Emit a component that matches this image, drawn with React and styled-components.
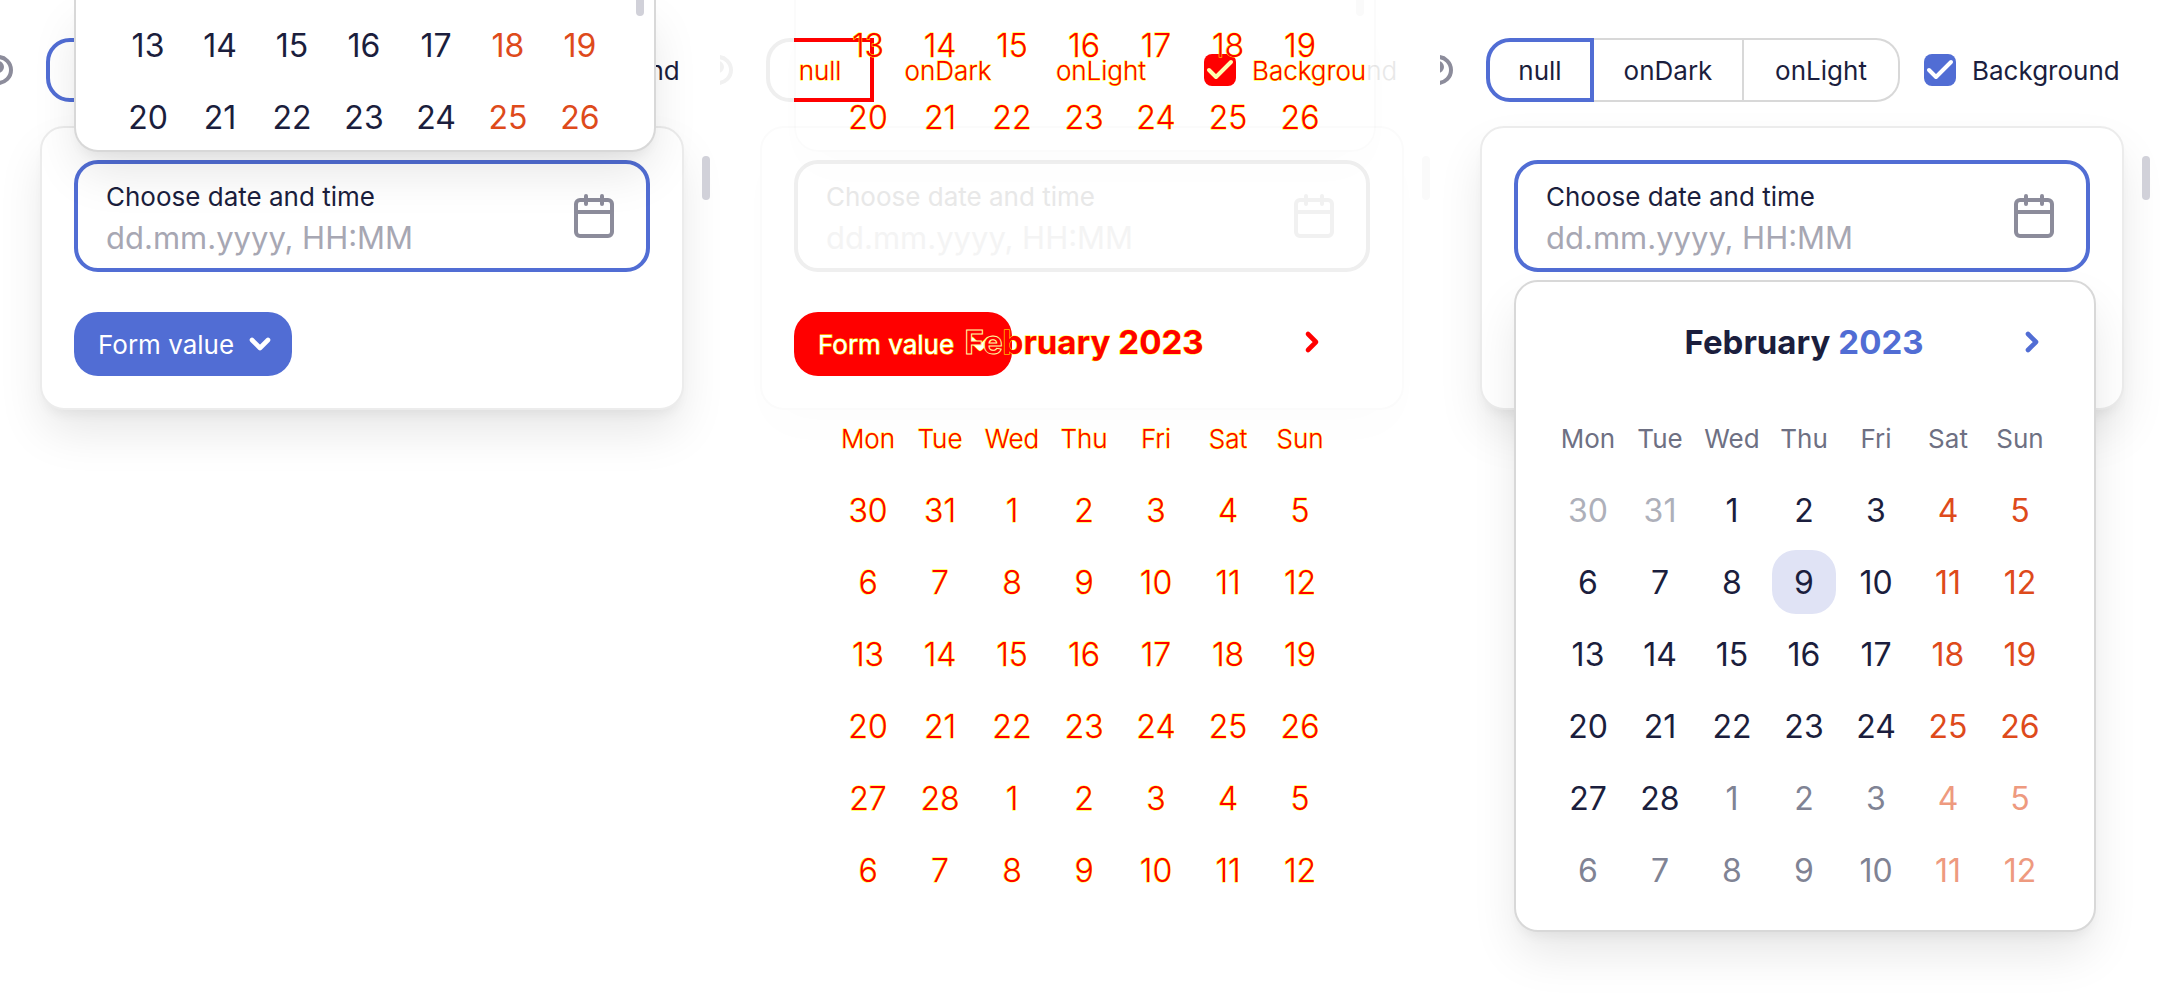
import React, { useId } from "react";
import styled, { createGlobalStyle, css, ThemeProvider } from "styled-components";

const plain = {
  diff: false,
  text: "#1b1e3d",
  muted: "#6e7083",
  past: "#aeb0ba",
  next: "#808394",
  weekend: "#de4a1b",
  weekendNext: "#ee9a7f",
  accent: "#516dd4",
  onAccent: "#ffffff",
  line: "#d8d8d8",
  cardLine: "#ececec",
  surface: "#ffffff",
  selected: "#e0e3f5",
  icon: "#8c8c9b",
  fieldLine: "#516dd4",
  fieldText: "#1b1e3d",
  placeholder: "#a7a7b3",
  thumb: "#d1d1d9",
  shadow: "0 24px 48px -4px rgba(0,0,0,0.1), 0 8px 12px -4px rgba(0,0,0,0.05)",
};

const red = "#ff0000";

const diff = {
  diff: true,
  text: red,
  muted: red,
  past: red,
  next: red,
  weekend: red,
  weekendNext: red,
  accent: red,
  onAccent: "#ffffff",
  line: "transparent",
  cardLine: "#fbfbfb",
  surface: "transparent",
  selected: "transparent",
  icon: "#f1f1f1",
  fieldLine: "#efefef",
  fieldText: "#e8e8e8",
  placeholder: "#f4f4f4",
  thumb: "#fafafa",
  shadow: "0 24px 48px -4px rgba(0,0,0,0.012)",
};

const outline = css`
  ${(p) =>
    p.theme.diff &&
    css`
      -webkit-text-stroke: 1px #ffff00;
      paint-order: stroke fill;
    `}
`;

const GlobalStyle = createGlobalStyle`
  *, *::before, *::after { box-sizing: border-box; }
  body {
    margin: 0;
    background: #ffffff;
    font-family: Inter, "Liberation Sans", sans-serif;
    font-size: 26px;
  }
  button, input { font: inherit; margin: 0; }
  button { padding: 0; border: 0; background: none; cursor: pointer; }
`;

const Page = styled.main`
  display: grid;
  grid-template-columns: repeat(3, minmax(0, 1fr));
  min-height: 100vh;
`;

const Panel = styled.section`
  display: flex;
  gap: 18px;
  padding-right: 10px;
  overflow: hidden;
  color: ${(p) => p.theme.text};
`;

const Content = styled.div`
  flex: 1;
  min-width: 0;
  padding-top: 38px;
`;

const Gutter = styled.div`
  width: 8px;
  padding-top: 156px;
`;

const Thumb = styled.div`
  height: 44px;
  border-radius: 4px;
  background: ${(p) => p.theme.thumb};
`;

const Toolbar = styled.div`
  display: flex;
  align-items: center;
  height: 64px;
`;

const EyeIcon = styled.svg`
  width: 14px;
  height: 32px;
  margin-right: 32px;
  color: ${(p) => p.theme.icon};
`;

const Segments = styled.div`
  display: grid;
  grid-template-columns: 108px 150px 156px;
  height: 64px;
  margin-right: 24px;
`;

const Segment = styled.button`
  position: relative;
  padding-top: 2px;
  border: solid ${(p) => p.theme.line};
  border-width: 2px 2px 2px 0;
  color: ${(p) => p.theme.text};
  line-height: 36px;
  font-weight: ${(p) => (p.theme.diff ? 300 : 400)};
  ${outline}

  &:last-child {
    border-radius: 0 24px 24px 0;
  }

  ${(p) =>
    p.$active &&
    css`
      border: 4px solid ${p.theme.fieldLine};
      border-radius: 24px 0 0 24px;
    `}

  ${(p) =>
    p.$active &&
    p.theme.diff &&
    css`
      &::after {
        content: "";
        position: absolute;
        inset: -4px -4px -4px 24px;
        border: 4px solid ${red};
        border-left: 0;
      }
    `}
`;

const CheckLabel = styled.label`
  display: flex;
  align-items: center;
  gap: 16px;
  line-height: 36px;
  white-space: nowrap;
  font-weight: ${(p) => (p.theme.diff ? 300 : 400)};
`;

const CheckText = styled.span`
  padding-top: 2px;
`;

const CheckBox = styled.span`
  display: grid;
  width: 32px;
  height: 32px;

  > * {
    grid-area: 1 / 1;
    width: 32px;
    height: 32px;
  }

  svg {
    pointer-events: none;
  }
`;

const CheckInput = styled.input`
  appearance: none;
  border-radius: 8px;
  background: ${(p) => p.theme.accent};
`;

const Outlined = styled.span`
  ${outline}
`;

const Ghost = styled.span`
  color: ${(p) => p.theme.fieldText};
`;

const Card = styled.div`
  display: flex;
  flex-direction: column;
  align-items: flex-start;
  gap: 40px;
  margin: 24px 0 0 40px;
  padding: 32px;
  border: 2px solid ${(p) => p.theme.cardLine};
  border-radius: 24px;
  background: #ffffff;
  box-shadow: ${(p) => p.theme.shadow};
`;

const FieldAnchor = styled.div`
  position: relative;
  z-index: 1;
  width: 100%;
`;

const Field = styled.div`
  display: flex;
  align-items: center;
  justify-content: space-between;
  height: 112px;
  padding: 0 28px;
  border: 4px solid ${(p) => p.theme.fieldLine};
  border-radius: 24px;
`;

const FieldText = styled.div`
  flex: 1;
  min-width: 0;
  color: ${(p) => p.theme.fieldText};

  label {
    display: block;
    line-height: 42px;
  }
`;

const DateInput = styled.input`
  display: block;
  width: 100%;
  height: 38px;
  padding: 0;
  border: 0;
  outline: 0;
  background: transparent;
  color: inherit;
  font-size: 31px;

  &::placeholder {
    color: ${(p) => p.theme.placeholder};
    opacity: 1;
  }
`;

const IconButton = styled.button`
  display: grid;
  place-items: center;
  width: 48px;
  height: 48px;
  color: ${(p) => p.color};
`;

const FormButton = styled.button`
  display: flex;
  align-items: center;
  justify-content: space-between;
  width: 218px;
  height: 64px;
  padding: 0 22px 0 24px;
  border-radius: 24px;
  background: ${(p) => p.theme.accent};
  color: ${(p) => p.theme.onAccent};
  white-space: nowrap;
  ${outline}
`;

const Popup = styled.div`
  position: absolute;
  left: 0;
  width: 582px;
  border: 2px solid ${(p) => p.theme.line};
  background: ${(p) => p.theme.surface};
  box-shadow: ${(p) => p.theme.shadow};
`;

const DropDown = styled(Popup)`
  top: calc(100% + 8px);
  padding: 0 36px 24px;
  border-radius: 24px;
  ${(p) => p.theme.diff && "box-shadow: none;"}
`;

const DropUp = styled(Popup)`
  bottom: calc(100% + 8px);
  height: 152px;
  padding: 9px 36px 0;
  border-top: 0;
  border-radius: 0 0 24px 24px;
  border-color: ${(p) => (p.theme.diff ? "rgba(0, 0, 0, 0.016)" : p.theme.line)};
  overflow: hidden;
`;

const PopupThumb = styled.div`
  position: absolute;
  top: 0;
  right: 10px;
  width: 8px;
  height: 16px;
  border-radius: 0 0 4px 4px;
  background: ${(p) => p.theme.thumb};
`;

const MonthBar = styled.div`
  display: grid;
  grid-template-columns: 48px 1fr 48px;
  align-items: center;
  width: 504px;
  height: 120px;
`;

const MonthTitle = styled.div`
  display: flex;
  justify-content: center;
  grid-column: 2;
  gap: 8px;
  font-size: 33px;
  font-weight: 700;
  line-height: 48px;

  button {
    color: ${(p) => p.theme.text};
    ${outline}
  }

  button + button {
    color: ${(p) => p.theme.accent};
  }
`;

const Traced = styled.span`
  -webkit-text-stroke: 1px #ffffa0;
  paint-order: fill stroke;
`;

const Calendar = styled.table`
  width: 504px;
  border-collapse: collapse;
  table-layout: fixed;

  th,
  td {
    width: 72px;
    height: 72px;
    padding: 0;
    text-align: center;
    vertical-align: middle;
  }

  th {
    color: ${(p) => p.theme.muted};
    font-weight: ${(p) => (p.theme.diff ? 300 : 400)};
    ${outline}
  }
`;

const Day = styled.button`
  display: block;
  width: 64px;
  height: 64px;
  margin: 0 auto;
  border-radius: 24px;
  font-size: 32px;
  font-weight: ${(p) => (p.theme.diff ? 300 : 400)};
  color: ${(p) => p.theme[p.$tone]};
  background: ${(p) => (p.$selected ? p.theme.selected : "transparent")};
  ${outline}
`;

const weekDays = ["Mon", "Tue", "Wed", "Thu", "Fri", "Sat", "Sun"];

// Negative days belong to January, days above 100 to March.
const february = [
  [-30, -31, 1, 2, 3, 4, 5],
  [6, 7, 8, 9, 10, 11, 12],
  [13, 14, 15, 16, 17, 18, 19],
  [20, 21, 22, 23, 24, 25, 26],
  [27, 28, 101, 102, 103, 104, 105],
  [106, 107, 108, 109, 110, 111, 112],
];

function toneOf(day, column) {
  if (day < 0) return "past";
  if (day > 100) return column > 4 ? "weekendNext" : "next";
  return column > 4 ? "weekend" : "text";
}

function Weeks({ weeks, selected }) {
  return (
    <tbody>
      {weeks.map((week) => (
        <tr key={week[0]}>
          {week.map((day, column) => (
            <td key={day}>
              <Day type="button" $tone={toneOf(day, column)} $selected={day === selected}>
                {Math.abs(day) % 100}
              </Day>
            </td>
          ))}
        </tr>
      ))}
    </tbody>
  );
}

function Chevron({ down, outlined }) {
  const d = down ? "M2 2l8 8 8-8" : "M2 2l8 8-8 8";
  return (
    <svg
      width={down ? 20 : 12}
      height={down ? 12 : 20}
      viewBox={down ? "0 0 20 12" : "0 0 12 20"}
      fill="none"
      strokeLinecap="round"
      strokeLinejoin="round"
      overflow="visible"
      aria-hidden="true"
    >
      {outlined && <path d={d} stroke="#ffff00" strokeWidth="6" />}
      <path d={d} stroke="currentColor" strokeWidth="4.6" />
    </svg>
  );
}

function CalendarGlyph() {
  return (
    <svg width="40" height="44" viewBox="0 0 40 44" fill="none" stroke="currentColor" strokeWidth="4" aria-hidden="true">
      <rect x="2" y="6" width="36" height="36" rx="4" />
      <path d="M2 18h36" />
      <path d="M12 2v8M28 2v8" strokeLinecap="round" />
    </svg>
  );
}

function DropUpCalendar() {
  return (
    <DropUp>
      <Calendar aria-label="February 2023">
        <Weeks weeks={february.slice(2, 4)} />
      </Calendar>
      <PopupThumb />
    </DropUp>
  );
}

function DropDownCalendar({ traced }) {
  return (
    <DropDown>
      <MonthBar>
        <MonthTitle>
          <button type="button">{traced ? <><Traced>Fe</Traced>bruary</> : "February"}</button>
          <button type="button">2023</button>
        </MonthTitle>
        <IconButton type="button" aria-label="Next month" color={traced ? red : plain.accent}>
          <Chevron />
        </IconButton>
      </MonthBar>
      <Calendar>
        <thead>
          <tr>
            {weekDays.map((name) => (
              <th key={name} scope="col">{name}</th>
            ))}
          </tr>
        </thead>
        <Weeks weeks={february} selected={9} />
      </Calendar>
    </DropDown>
  );
}

function DemoPanel({ theme, up, down }) {
  const id = useId();
  const isDiff = theme.diff;
  return (
    <ThemeProvider theme={theme}>
      <Panel>
        <Content>
          <Toolbar>
            <EyeIcon viewBox="18 0 14 32" aria-hidden="true">
              <circle cx="16" cy="16" r="13" fill="none" stroke="currentColor" strokeWidth="4" />
              <circle cx="16" cy="13" r="6" fill="currentColor" />
            </EyeIcon>
            <Segments role="group" aria-label="Mode">
              <Segment type="button" $active aria-pressed="true">null</Segment>
              <Segment type="button" aria-pressed="false">onDark</Segment>
              <Segment type="button" aria-pressed="false">onLight</Segment>
            </Segments>
            <CheckLabel>
              <CheckBox>
                <CheckInput type="checkbox" defaultChecked />
                <svg viewBox="0 0 32 32" fill="none" strokeLinecap="round" strokeLinejoin="round" aria-hidden="true">
                  <path
                    d="M5 16l7 7L27 8"
                    stroke={isDiff ? "#ffffb0" : "#ffffff"}
                    strokeWidth="4"
                  />
                </svg>
              </CheckBox>
              <CheckText>
                {isDiff ? <><Outlined>Backgrou</Outlined><Ghost>nd</Ghost></> : "Background"}
              </CheckText>
            </CheckLabel>
          </Toolbar>
          <Card>
            <FieldAnchor>
              <Field>
                <FieldText>
                  <label htmlFor={id}>Choose date and time</label>
                  <DateInput id={id} type="text" placeholder="dd.mm.yyyy, HH:MM" />
                </FieldText>
                <IconButton type="button" aria-label="Open calendar" color={theme.icon}>
                  <CalendarGlyph />
                </IconButton>
              </Field>
              {up && <DropUpCalendar />}
              {down && <DropDownCalendar traced={isDiff} />}
            </FieldAnchor>
            <FormButton type="button">
              Form value
              <Chevron down outlined={isDiff} />
            </FormButton>
          </Card>
        </Content>
        <Gutter>
          <Thumb />
        </Gutter>
      </Panel>
    </ThemeProvider>
  );
}

export default function App() {
  return (
    <>
      <GlobalStyle />
      <Page>
        <DemoPanel theme={plain} up />
        <DemoPanel theme={diff} up down />
        <DemoPanel theme={plain} down />
      </Page>
    </>
  );
}
